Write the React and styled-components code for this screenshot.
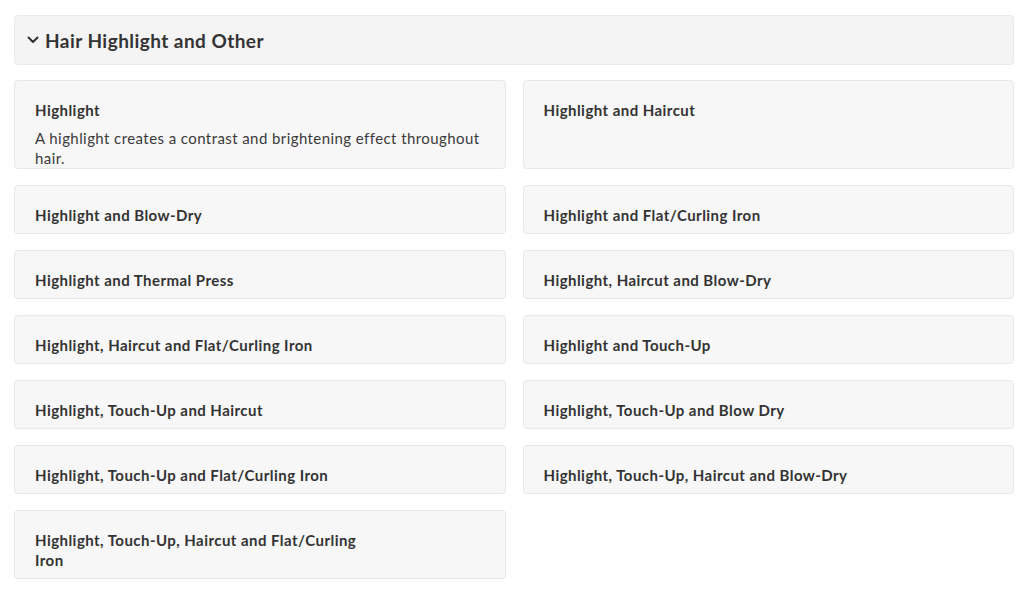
import React from 'react';
import styled, { createGlobalStyle } from 'styled-components';

const GlobalStyle = createGlobalStyle`
  body {
    margin: 0;
    background: #fff;
    font-family: Lato, "Open Sans", sans-serif;
    color: #333;
  }
`;

const Page = styled.div`
  width: 1000px;
  padding: 15px 0 0 14px;
`;

const SectionHeader = styled.div`
  height: 50px;
  box-sizing: border-box;
  display: flex;
  align-items: center;
  gap: 6px;
  padding: 0 12px;
  background-color: #f4f4f4;
  border: 1px solid #e9e9e9;
  border-radius: 4px;
  font-size: 19px;
  font-weight: 700;
  letter-spacing: 0.45px;
  color: #333;
`;

const Grid = styled.div`
  margin-top: 15px;
  display: grid;
  grid-template-columns: 1fr 1fr;
  column-gap: 17px;
  row-gap: 16px;
  align-items: stretch;
`;

const Card = styled.div`
  box-sizing: border-box;
  max-height: 89px;
  overflow: hidden;
  padding: 19px 20px 8px;
  background-color: #f7f7f7;
  border: 1px solid #e8e8e8;
  border-radius: 4px;
`;

const Title = styled.div`
  max-width: 75%;
  font-size: 15px;
  line-height: 20px;
  font-weight: 700;
  letter-spacing: 0.45px;
  color: #333;
`;

const Description = styled.div`
  margin-top: 8px;
  font-size: 15px;
  line-height: 20px;
  font-weight: 400;
  letter-spacing: 0.42px;
  color: #3a3a3a;
`;

const services = [
  {
    title: 'Highlight',
    description:
      'A highlight creates a contrast and brightening effect throughout hair.',
  },
  { title: 'Highlight and Haircut' },
  { title: 'Highlight and Blow-Dry' },
  { title: 'Highlight and Flat/Curling Iron' },
  { title: 'Highlight and Thermal Press' },
  { title: 'Highlight, Haircut and Blow-Dry' },
  { title: 'Highlight, Haircut and Flat/Curling Iron' },
  { title: 'Highlight and Touch-Up' },
  { title: 'Highlight, Touch-Up and Haircut' },
  { title: 'Highlight, Touch-Up and Blow Dry' },
  { title: 'Highlight, Touch-Up and Flat/Curling Iron' },
  { title: 'Highlight, Touch-Up, Haircut and Blow-Dry' },
  { title: 'Highlight, Touch-Up, Haircut and Flat/Curling Iron' },
];

const Chevron = () => (
  <svg width="12" height="8" viewBox="0 0 12 8" fill="none">
    <polyline
      points="1.5,1.5 6,6 10.5,1.5"
      stroke="#333"
      strokeWidth="2"
      strokeLinecap="round"
      strokeLinejoin="round"
    />
  </svg>
);

export default function App() {
  return (
    <Page>
      <GlobalStyle />
      <SectionHeader>
        <Chevron />
        <span>Hair Highlight and Other</span>
      </SectionHeader>
      <Grid>
        {services.map((s) => (
          <Card key={s.title}>
            <Title>{s.title}</Title>
            {s.description && <Description>{s.description}</Description>}
          </Card>
        ))}
      </Grid>
    </Page>
  );
}
